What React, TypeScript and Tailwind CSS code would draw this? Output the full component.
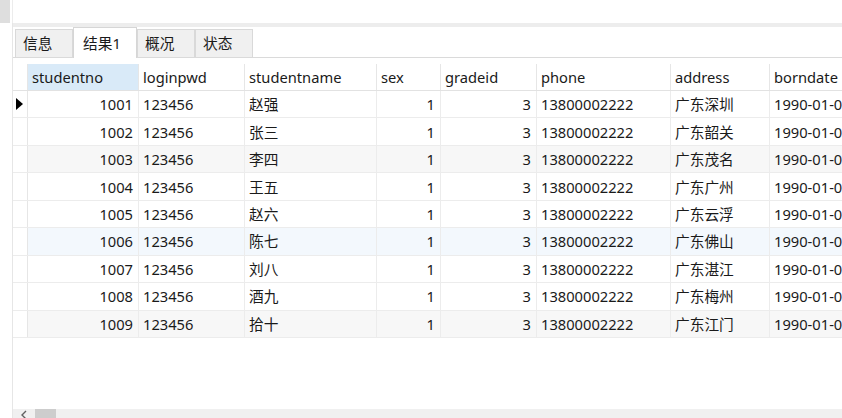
import React from 'react';

const columns = [
  { key: 'studentno', label: 'studentno', width: 111, align: 'right' },
  { key: 'loginpwd', label: 'loginpwd', width: 106, align: 'left' },
  { key: 'studentname', label: 'studentname', width: 132, align: 'left' },
  { key: 'sex', label: 'sex', width: 64, align: 'right' },
  { key: 'gradeid', label: 'gradeid', width: 96, align: 'right' },
  { key: 'phone', label: 'phone', width: 134, align: 'left' },
  { key: 'address', label: 'address', width: 99, align: 'left' },
  { key: 'borndate', label: 'borndate', width: 120, align: 'left' },
] as const;

type Row = Record<(typeof columns)[number]['key'], string>;

const people: [string, string, string][] = [
  ['1001', '赵强', '广东深圳'],
  ['1002', '张三', '广东韶关'],
  ['1003', '李四', '广东茂名'],
  ['1004', '王五', '广东广州'],
  ['1005', '赵六', '广东云浮'],
  ['1006', '陈七', '广东佛山'],
  ['1007', '刘八', '广东湛江'],
  ['1008', '酒九', '广东梅州'],
  ['1009', '拾十', '广东江门'],
];

const rows: Row[] = people.map(([no, name, addr]) => ({
  studentno: no,
  loginpwd: '123456',
  studentname: name,
  sex: '1',
  gradeid: '3',
  phone: '13800002222',
  address: addr,
  borndate: '1990-01-01',
}));

const rowBg = (i: number) => {
  if (i === 5) return 'bg-[#f3f8fd]';
  if (i === 2 || i === 8) return 'bg-[#f7f7f7]';
  return 'bg-white';
};

export default function App() {
  const tabs = ['信息', '结果1', '概况', '状态'];

  return (
    <div
      className="w-[842px] h-[418px] bg-white overflow-hidden flex flex-col text-[#1a1a1a]"
      style={{ fontFamily: '"Noto Sans", "Noto Sans CJK SC", sans-serif' }}
    >
      {/* top strip */}
      <div className="h-[23px] flex shrink-0">
        <div className="w-[10px] bg-[#dedede]" />
        <div className="w-[2px]" />
        <div className="flex-1 border-l border-[#ececec]" />
      </div>

      <div className="flex-1 flex min-h-0">
        <div className="w-[12px] shrink-0" />
        <div className="flex-1 flex flex-col border-l border-[#e6e6e6] min-w-0">
          <div className="h-[4px] bg-[#ededed] shrink-0" />

          {/* tabs */}
          <div className="h-[31px] flex items-end pl-[2px] border-b border-[#dadada] shrink-0">
            {tabs.map((t) => {
              const active = t === '结果1';
              return (
                <div
                  key={t}
                  className={
                    active
                      ? 'h-[31px] w-[64px] -mb-px bg-white border border-b-0 border-[#d6d6d6] pl-[9px] flex items-center text-[14.7px] leading-none'
                      : 'h-[28px] w-[58px] bg-[#f0f0f0] border border-b-0 border-[#d9d9d9] pl-[7px] flex items-center text-[14.7px] leading-none'
                  }
                >
                  {t}
                </div>
              );
            })}
          </div>

          {/* grid */}
          <div className="pt-[6px] shrink-0">
            <div className="flex h-[27px] border-b border-[#e2e2e2]">
              <div className="w-[15px] shrink-0 border-r border-[#e6e6e6]" />
              {columns.map((c, i) => (
                <div
                  key={c.key}
                  style={{ width: c.width }}
                  className={`shrink-0 border-r border-[#e6e6e6] pl-[4px] flex items-center text-[14.7px] whitespace-nowrap overflow-hidden ${
                    i === 0 ? 'bg-[#d9eaf8]' : 'bg-white'
                  }`}
                >
                  {c.label}
                </div>
              ))}
            </div>

            {rows.map((r, ri) => (
              <div key={r.studentno} className={`flex h-[27.45px] border-b border-[#ececec] ${rowBg(ri)}`}>
                <div className="w-[15px] shrink-0 border-r border-[#e6e6e6] bg-white flex items-center pl-[3px]">
                  {ri === 0 && (
                    <svg width="7" height="12" viewBox="0 0 7 12">
                      <polygon points="0,0 7,6 0,12" fill="#000" />
                    </svg>
                  )}
                </div>
                {columns.map((c) => (
                  <div
                    key={c.key}
                    style={{ width: c.width }}
                    className={`shrink-0 border-r border-[#ececec] flex items-center text-[14.7px] whitespace-nowrap overflow-hidden ${
                      c.align === 'right' ? 'justify-end pr-[5px]' : 'pl-[4px]'
                    }`}
                  >
                    {r[c.key]}
                  </div>
                ))}
              </div>
            ))}
          </div>

          <div className="flex-1" />

          {/* horizontal scrollbar */}
          <div className="h-[9px] bg-[#f0f0f0] flex items-start shrink-0">
            <div className="w-[22px] flex justify-center pt-[1px]">
              <svg width="6" height="10" viewBox="0 0 6 10">
                <polyline points="5,1 1,5 5,9" fill="none" stroke="#606060" strokeWidth="1.4" />
              </svg>
            </div>
            <div className="w-[21px] h-full bg-[#cdcdcd]" />
          </div>
        </div>
      </div>
    </div>
  );
}
